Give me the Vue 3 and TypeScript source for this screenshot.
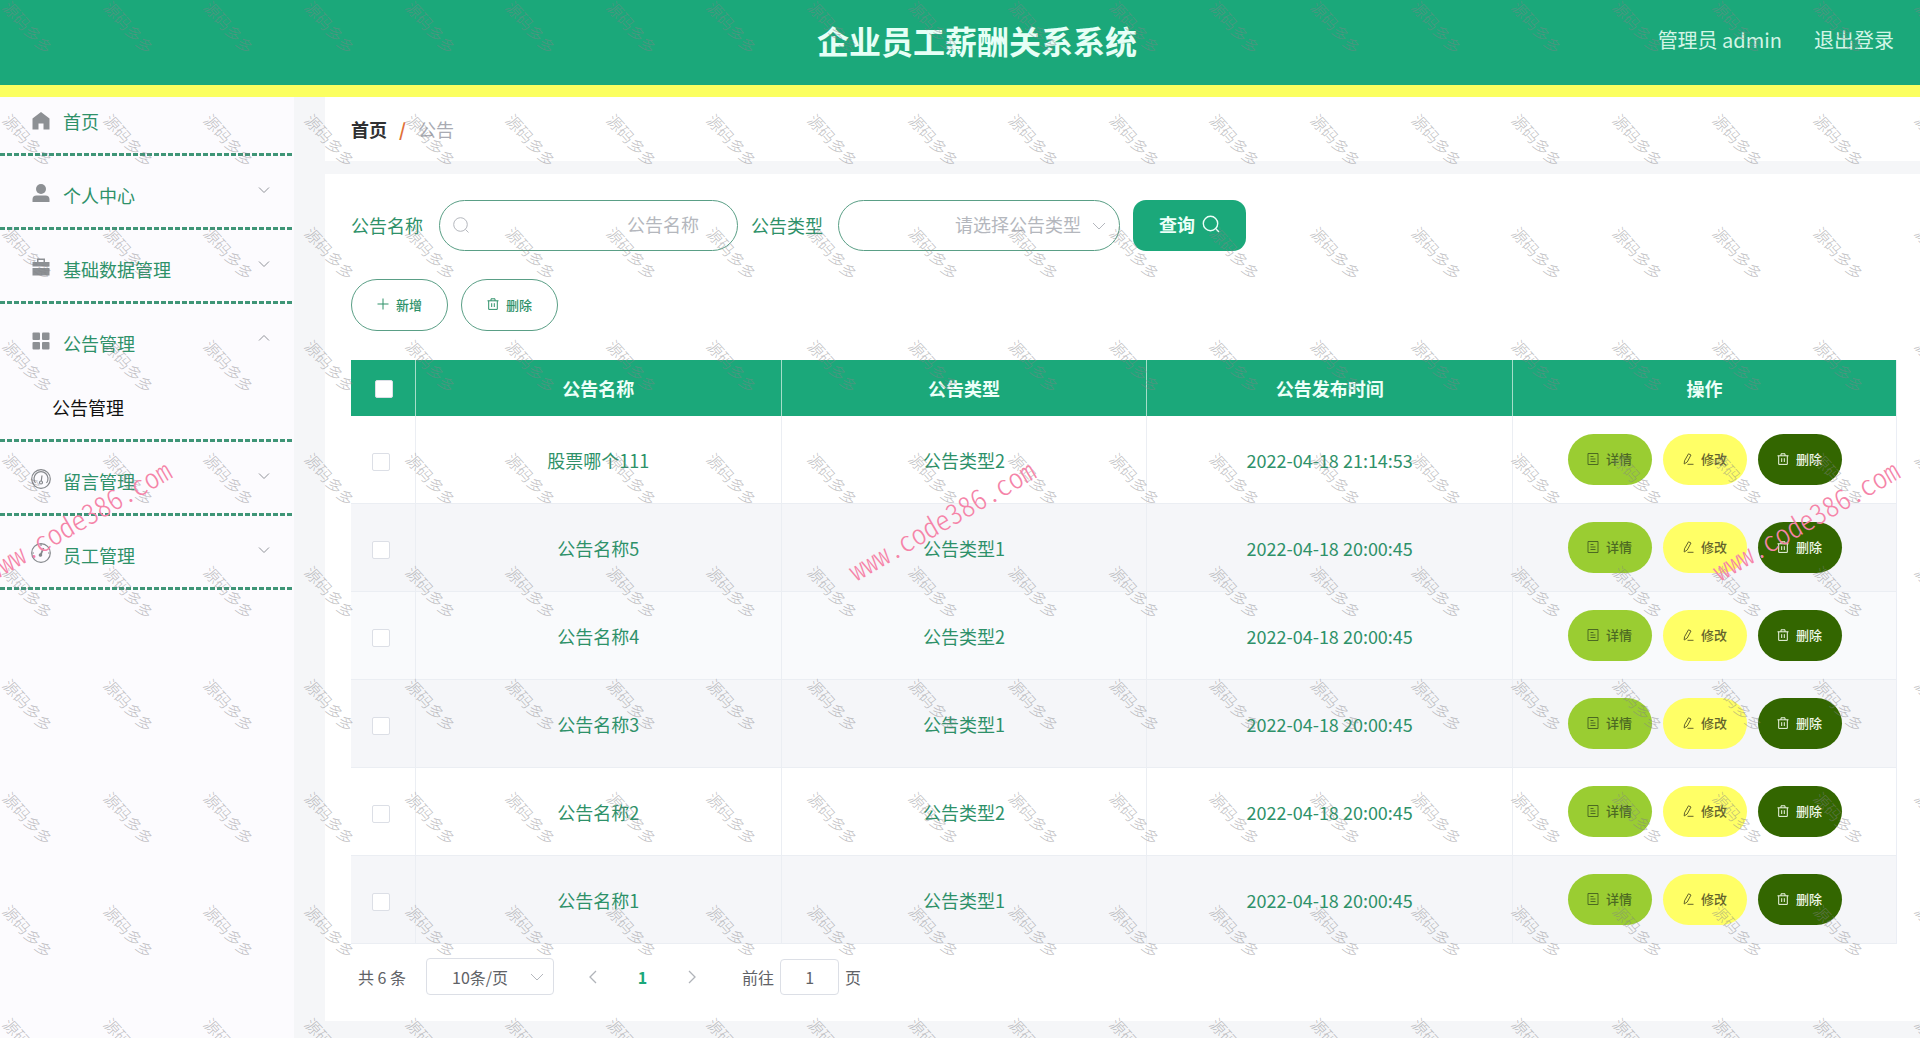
<script setup lang="ts">
import { ref } from 'vue'

interface MenuItem {
  label: string
  icon: 'home' | 'user' | 'case' | 'grid' | 'gauge' | 'meter'
  arrow?: 'down' | 'up'
  children?: string[]
}

interface Notice {
  name: string
  type: string
  time: string
}

const menu: MenuItem[] = [
  { label: '首页', icon: 'home' },
  { label: '个人中心', icon: 'user', arrow: 'down' },
  { label: '基础数据管理', icon: 'case', arrow: 'down' },
  { label: '公告管理', icon: 'grid', arrow: 'up', children: ['公告管理'] },
  { label: '留言管理', icon: 'gauge', arrow: 'down' },
  { label: '员工管理', icon: 'meter', arrow: 'down' },
]

const notices: Notice[] = [
  { name: '股票哪个111', type: '公告类型2', time: '2022-04-18 21:14:53' },
  { name: '公告名称5', type: '公告类型1', time: '2022-04-18 20:00:45' },
  { name: '公告名称4', type: '公告类型2', time: '2022-04-18 20:00:45' },
  { name: '公告名称3', type: '公告类型1', time: '2022-04-18 20:00:45' },
  { name: '公告名称2', type: '公告类型2', time: '2022-04-18 20:00:45' },
  { name: '公告名称1', type: '公告类型1', time: '2022-04-18 20:00:45' },
]

const nameQuery = ref('')
const typeQuery = ref('')
const pageSize = ref('10')
const jumpTo = ref('1')
const tileCount = 200
</script>

<template>
  <div class="app">
    <header class="topbar">
      <h1 class="title">企业员工薪酬关系系统</h1>
      <div class="account">
        <span>管理员 admin</span>
        <a href="#logout">退出登录</a>
      </div>
    </header>

    <div class="body">
      <nav class="sidebar">
        <ul class="menu">
          <li v-for="item in menu" :key="item.label" class="menu-item">
            <a class="menu-link" href="#menu">
              <svg class="menu-icon" viewBox="0 0 20 20" aria-hidden="true">
                <path v-if="item.icon === 'home'" d="M10 1 1.500 7.500V18.500h6V12.500h5v6h6V7.500z" fill="#8d9094" />
                <g v-else-if="item.icon === 'user'" fill="#8d9094">
                  <circle cx="10" cy="6" r="5" />
                  <path d="M1.500 19v-2.500a4 4 0 0 1 4-4h9a4 4 0 0 1 4 4V19z" />
                </g>
                <g v-else-if="item.icon === 'case'" fill="#8d9094">
                  <path d="M6 5V1.500h8V5h-1.500V3h-5v2z" />
                  <path d="M1.500 5h17v4.500h-17zM1.500 11h17v7.500h-17z" />
                </g>
                <g v-else-if="item.icon === 'grid'" fill="#8d9094">
                  <rect x="1.500" y="1.500" width="7.500" height="7.500" rx="1" />
                  <rect x="11" y="1.500" width="7.500" height="7.500" rx="1" />
                  <rect x="1.500" y="11" width="7.500" height="7.500" rx="1" />
                  <rect x="11" y="11" width="7.500" height="7.500" rx="1" />
                </g>
                <g v-else-if="item.icon === 'gauge'" fill="none" stroke="#85888c" stroke-width="1.200">
                  <circle cx="10" cy="10" r="9.300" />
                  <path d="M4.500 14a7 7 0 1 1 11 0" />
                  <path d="M11 6.500 10.300 12" />
                  <circle cx="10" cy="13.500" r="1.500" />
                </g>
                <g v-else fill="none" stroke="#85888c" stroke-width="1.200">
                  <circle cx="10" cy="10" r="9.300" />
                  <path d="M12.500 5 10 11" stroke-width="1.800" />
                  <circle cx="9.500" cy="12" r="1.200" fill="#85888c" />
                  <path d="M10 1v2M3 10H1.500M17 10h1.500" />
                </g>
              </svg>
              <span class="menu-label">{{ item.label }}</span>
              <svg v-if="item.arrow" class="menu-arrow" viewBox="0 0 12 12" aria-hidden="true">
                <path :d="item.arrow === 'down' ? 'M1 3.500 6 8.500 11 3.500' : 'M1 8.500 6 3.500 11 8.500'" />
              </svg>
            </a>
            <ul v-if="item.children" class="submenu">
              <li v-for="child in item.children" :key="child"><a href="#submenu">{{ child }}</a></li>
            </ul>
          </li>
        </ul>
      </nav>

      <main class="content">
        <nav class="breadcrumb">
          <a href="#home">首页</a>
          <span class="slash">/</span>
          <span class="current">公告</span>
        </nav>

        <section class="panel">
          <form class="search" @submit.prevent>
            <label for="notice-name">公告名称</label>
            <div class="field field-name">
              <svg class="field-search" viewBox="0 0 16 16" aria-hidden="true">
                <circle cx="7.500" cy="7.500" r="6.800" /><path d="m12.500 12.500 3 3" />
              </svg>
              <input id="notice-name" v-model="nameQuery" type="text" placeholder="公告名称" />
            </div>
            <label for="notice-type">公告类型</label>
            <div class="field field-type">
              <select id="notice-type" v-model="typeQuery">
                <option value="">请选择公告类型</option>
                <option value="1">公告类型1</option>
                <option value="2">公告类型2</option>
              </select>
              <svg class="chevron" viewBox="0 0 14 14" aria-hidden="true"><path d="m1 4 6 6 6-6" /></svg>
            </div>
            <button class="query" type="submit">
              查询
              <svg viewBox="0 0 18 18" aria-hidden="true">
                <circle cx="8.500" cy="8.500" r="7.200" /><path d="m13.800 13.800 3.200 3.200" />
              </svg>
            </button>
          </form>

          <div class="tools">
            <button class="pill outline" type="button">
              <svg viewBox="0 0 12 12" aria-hidden="true"><path d="M6 0.500v11M0.500 6h11" /></svg>新增
            </button>
            <button class="pill outline" type="button">
              <svg viewBox="0 0 12 12" aria-hidden="true">
                <path d="M0.500 2.800h11M4 2.800V0.800h4v2M1.700 2.800v8.600h8.600V2.800M4.700 5.200v3.800M7.300 5.200v3.800" />
              </svg>删除
            </button>
          </div>

          <table class="grid">
            <colgroup>
              <col class="col-check" /><col /><col /><col /><col class="col-action" />
            </colgroup>
            <thead>
              <tr>
                <th class="check"><input type="checkbox" aria-label="全选" /></th>
                <th>公告名称</th>
                <th>公告类型</th>
                <th>公告发布时间</th>
                <th>操作</th>
              </tr>
            </thead>
            <tbody>
              <tr v-for="notice in notices" :key="notice.name">
                <td class="check"><input type="checkbox" :aria-label="notice.name" /></td>
                <td>{{ notice.name }}</td>
                <td>{{ notice.type }}</td>
                <td>{{ notice.time }}</td>
                <td>
                  <div class="actions">
                    <button class="pill detail" type="button">
                      <svg viewBox="0 0 12 12" aria-hidden="true">
                        <path d="M1 0.500h10v11H1zM3.500 3.500h3M3.500 6h5M3.500 8.500h5" />
                      </svg>详情
                    </button>
                    <button class="pill edit" type="button">
                      <svg viewBox="0 0 12 12" aria-hidden="true">
                        <path d="M6.500 0.800 9 2 5.200 9 2.200 11 2.500 7.800zM5.500 11.300h6" />
                      </svg>修改
                    </button>
                    <button class="pill remove" type="button">
                      <svg viewBox="0 0 12 12" aria-hidden="true">
                        <path d="M0.500 2.800h11M4 2.800V0.800h4v2M1.700 2.800v8.600h8.600V2.800M4.700 5.200v3.800M7.300 5.200v3.800" />
                      </svg>删除
                    </button>
                  </div>
                </td>
              </tr>
            </tbody>
          </table>

          <div class="pager">
            <span>共 6 条</span>
            <div class="page-size">
              <select v-model="pageSize" aria-label="每页条数">
                <option value="10">10条/页</option>
                <option value="20">20条/页</option>
              </select>
              <svg class="chevron" viewBox="0 0 14 14" aria-hidden="true"><path d="m1 4 6 6 6-6" /></svg>
            </div>
            <button class="step" type="button" aria-label="上一页">
              <svg viewBox="0 0 8 14" aria-hidden="true"><path d="M7 1 1 7l6 6" /></svg>
            </button>
            <button class="page" type="button">1</button>
            <button class="step" type="button" aria-label="下一页">
              <svg viewBox="0 0 8 14" aria-hidden="true"><path d="m1 1 6 6-6 6" /></svg>
            </button>
            <label class="jump">前往<input v-model="jumpTo" type="text" />页</label>
          </div>
        </section>
      </main>
    </div>

    <div class="tiles" aria-hidden="true">
      <span v-for="n in tileCount" :key="n">源码多多</span>
    </div>
    <div class="stamps" aria-hidden="true">
      <span class="stamp-left">www.code386.com</span>
      <span class="stamp-mid">www.code386.com</span>
      <span class="stamp-right">www.code386.com</span>
    </div>
  </div>
</template>

<style>
body {
  margin: 0;
  background: #f5f6f8;
}
</style>

<style scoped>
*,
*::before,
*::after {
  box-sizing: border-box;
}

.app {
  position: relative;
  display: flex;
  flex-direction: column;
  min-height: 100vh;
  overflow: hidden;
  font-family: 'Noto Sans CJK SC', sans-serif;
  font-size: 18px;
  line-height: 24px;
  color: #2e9169;
}

a {
  color: inherit;
  text-decoration: none;
}

ul {
  margin: 0;
  padding: 0;
  list-style: none;
}

button,
input,
select {
  margin: 0;
  font-family: inherit;
}

svg {
  flex: none;
  fill: none;
  stroke: currentColor;
}

.menu-icon {
  stroke: none;
}

/* Header */
.topbar {
  display: grid;
  grid-template-columns: 1fr auto 1fr;
  align-items: center;
  height: 97px;
  padding: 0 26px 6px 60px;
  border-bottom: 12px solid #fbff60;
  background: #1ba87a;
  color: #e6fff6;
}

.title {
  grid-column: 2;
  margin: 0;
  font-size: 32px;
  line-height: 40px;
  font-weight: 700;
}

.account {
  display: flex;
  justify-content: flex-end;
  gap: 32px;
  font-size: 20px;
  color: #d2f5e6;
}

.body {
  display: flex;
  flex: 1;
  gap: 31px;
}

/* Sidebar */
.sidebar {
  flex: none;
  width: 294px;
  background: #fcfbfe;
}

.menu-item {
  padding-bottom: 3px;
  background: repeating-linear-gradient(90deg, #3f9577 0 5px, transparent 5px 7px) left bottom / 100% 3px no-repeat;
}

.menu-link {
  display: flex;
  align-items: center;
  height: 71px;
  padding: 2px 24px 0 31px;
}

.menu-item:first-child .menu-link {
  height: 56px;
  padding-bottom: 10px;
}

.menu-icon {
  width: 20px;
  height: 20px;
  margin-right: 12px;
}

.menu-label {
  padding-top: 4px;
}

.menu-item:first-child .menu-label {
  padding-top: 0;
}

.menu-arrow {
  width: 12px;
  height: 12px;
  margin: 0 0 6px auto;
  color: #909399;
}

.submenu {
  padding: 10px 0 10px 52px;
  line-height: 44px;
  color: #111111;
}

/* Content */
.content {
  flex: 1;
  min-width: 0;
}

.breadcrumb {
  display: flex;
  align-items: center;
  height: 64px;
  padding: 0 26px;
  background: #ffffff;
}

.breadcrumb a {
  font-weight: 700;
  color: #303133;
}

.slash {
  margin: 0 12px;
  font-weight: 700;
  color: #e07038;
}

.current {
  color: #a9abb3;
}

.panel {
  margin-top: 13px;
  padding: 26px 23px 26px 26px;
  background: #ffffff;
}

.search {
  display: flex;
  align-items: center;
  height: 51px;
}

.search label {
  padding-bottom: 2px;
}

.field {
  position: relative;
  height: 51px;
  margin: 0 13px 0 16px;
}

.field-name {
  width: 299px;
}

.field-type {
  width: 282px;
  margin-left: 15px;
}

.field input,
.field select {
  width: 100%;
  height: 100%;
  padding: 0 38px 4px;
  border: 1px solid #5a9f86;
  border-radius: 26px;
  outline: none;
  appearance: none;
  background: transparent;
  font-size: 18px;
  text-align: right;
  text-align-last: right;
  color: #b4b7bd;
}

.field input::placeholder {
  color: #b4b7bd;
}

.field-search {
  position: absolute;
  top: 17px;
  left: 14px;
  width: 16px;
  height: 16px;
  color: #b4b7bd;
}

.chevron {
  position: absolute;
  top: 50%;
  right: 14px;
  width: 14px;
  height: 14px;
  margin-top: -7px;
  color: #b4b7bd;
  pointer-events: none;
}

.query {
  display: flex;
  align-items: center;
  justify-content: center;
  gap: 7px;
  width: 113px;
  height: 51px;
  padding: 0 0 4px;
  border: 0;
  border-radius: 13px;
  background: #1ba87a;
  font-size: 18px;
  font-weight: 700;
  color: #ecfff8;
}

.query svg {
  width: 18px;
  height: 18px;
  stroke-width: 1.4;
}

.tools {
  display: flex;
  gap: 13px;
  margin: 28px 0 29px;
}

.pill {
  display: flex;
  align-items: center;
  justify-content: center;
  gap: 7px;
  width: 84px;
  height: 51px;
  padding: 0 0 2px;
  border: 0;
  border-radius: 26px;
  font-size: 13px;
  font-weight: 500;
}

.pill svg {
  width: 12px;
  height: 12px;
}

.outline {
  width: 97px;
  height: 52px;
  border: 1px solid #5a9f86;
  background: #ffffff;
  color: #2e9169;
}

.detail {
  background: #9acd32;
  color: #4c6a22;
}

.edit {
  background: #ffff66;
  color: #64642c;
}

.remove {
  background: #336600;
  color: #f0f8e8;
}

/* Table */
.grid {
  width: 100%;
  table-layout: fixed;
  border-collapse: separate;
  border-spacing: 0;
  border-right: 1px solid #ebeef5;
}

.col-check {
  width: 65px;
}

.col-action {
  width: 383px;
}

.grid th {
  height: 56px;
  padding: 0;
  border-right: 1px solid #a5ddc9;
  background: #1ba87a;
  font-weight: 700;
  color: #ecfff8;
}

.grid th:last-child {
  border-right: 0;
}

.grid td {
  height: 88px;
  padding: 1px 0 0;
  border-right: 1px solid #ebeef3;
  border-bottom: 1px solid #ebeef3;
  text-align: center;
}

.grid td:last-child {
  padding: 0;
  border-right: 0;
}

.grid tbody tr:nth-child(even) {
  background: #f5f6f9;
}

.grid tbody tr:nth-child(3) {
  background: #f9fafc;
}

.check input {
  display: block;
  width: 18px;
  height: 18px;
  margin: 0 auto;
  border: 1px solid #dcdfe6;
  border-radius: 2px;
  appearance: none;
  background: #ffffff;
}

.grid th.check {
  padding: 2px 0 0 1px;
}

.grid td.check {
  padding: 4px 4px 0 0;
}

.actions {
  display: flex;
  justify-content: center;
  gap: 11px;
}

/* Pagination */
.pager {
  display: flex;
  align-items: center;
  margin-top: 14px;
  padding-left: 7px;
  font-size: 16px;
  color: #606266;
}

.page-size {
  position: relative;
  width: 128px;
  height: 37px;
  margin: 0 35px 0 20px;
}

.page-size select {
  width: 100%;
  height: 100%;
  padding: 0 20px 0 0;
  border: 1px solid #dcdfe6;
  border-radius: 4px;
  appearance: none;
  background: #ffffff;
  font-size: 16px;
  text-align: center;
  text-align-last: center;
  color: #606266;
}

.page-size .chevron {
  right: 10px;
}

.step {
  display: flex;
  padding: 0;
  border: 0;
  background: none;
  color: #b0b3b9;
}

.step svg {
  width: 8px;
  height: 14px;
  stroke-width: 1.3;
}

.page {
  width: 91px;
  padding: 0;
  border: 0;
  background: none;
  font-size: 16px;
  font-weight: 700;
  color: #1ba87a;
}

.jump {
  display: flex;
  align-items: center;
  margin-left: 46px;
}

.jump input {
  width: 59px;
  height: 36px;
  margin: 0 6px;
  padding: 0;
  border: 1px solid #dcdfe6;
  border-radius: 4px;
  font-size: 16px;
  text-align: center;
  color: #606266;
}

/* Watermarks laid over the whole page */
.tiles {
  position: absolute;
  top: -30px;
  right: -70px;
  left: -22px;
  display: grid;
  grid-template-columns: repeat(20, 1fr);
  grid-auto-rows: 113px;
  place-items: center;
  pointer-events: none;
}

.tiles span {
  font-size: 16px;
  font-weight: 300;
  color: rgba(130, 130, 135, 0.5);
  transform: rotate(48deg);
}

.stamps span {
  position: absolute;
  top: 519px;
  font-size: 28px;
  font-weight: 300;
  font-feature-settings: 'hwid';
  color: #f584a8;
  pointer-events: none;
  transform: translate(-50%, -50%) rotate(-30deg);
}

.stamp-left {
  left: 4%;
}

.stamp-mid {
  left: 49%;
}

.stamp-right {
  left: 94%;
}
</style>
